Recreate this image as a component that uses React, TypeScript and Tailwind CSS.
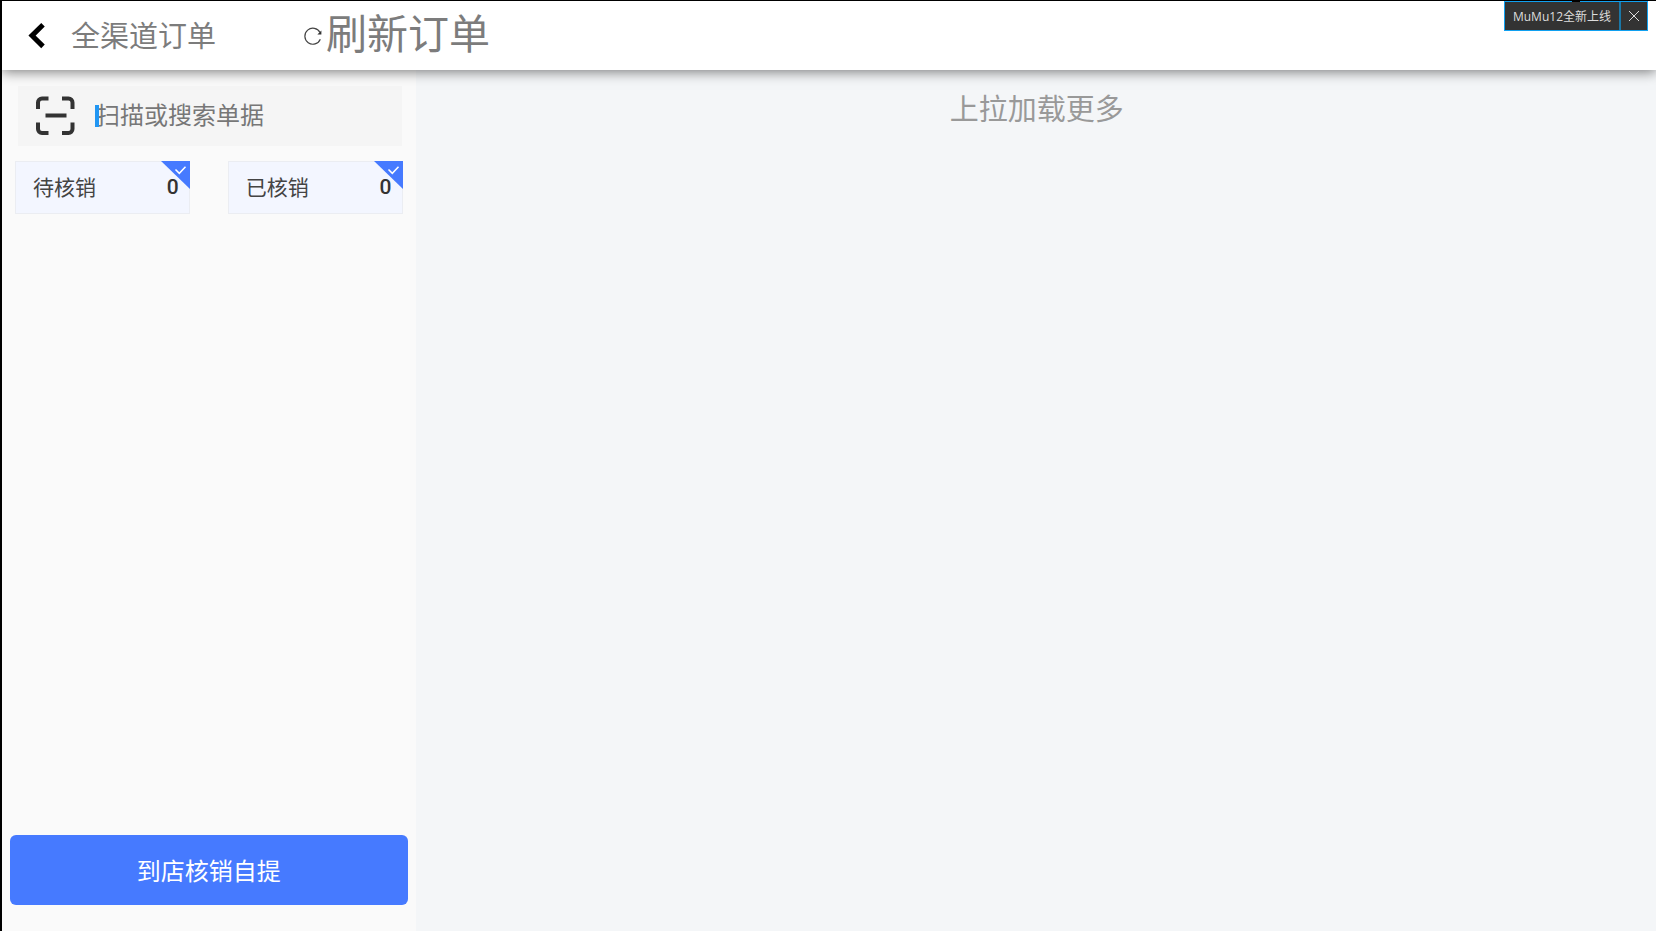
import { useState } from 'react';

const tabs = [
  { id: 'pending', label: '待核销', count: 0 },
  { id: 'done', label: '已核销', count: 0 },
];

function BackIcon() {
  return (
    <svg className="h-7 w-5" viewBox="0 0 20 28" fill="none" stroke="#000" strokeWidth="5" aria-hidden="true">
      <path d="M17 2.800 6 13.600l11 10.800" />
    </svg>
  );
}

function RefreshIcon() {
  return (
    <svg className="h-5 w-5" viewBox="0 0 20 20" fill="none" stroke="#444" strokeWidth="1.2" aria-hidden="true">
      <path d="M17.300 13.200A8 8 0 1 1 17 6.600" />
      <path d="M18.400 4.600v3.900h-4z" fill="#333" stroke="none" />
    </svg>
  );
}

function ScanIcon() {
  return (
    <svg className="h-10 w-10 shrink-0" viewBox="0 0 40 40" fill="none" stroke="#333" strokeWidth="4" aria-hidden="true">
      <path d="M3 13V6.500a4 4 0 0 1 4-4h6.500M27 2.500h6.500a4 4 0 0 1 4 4V13M37.500 26.500V33a4 4 0 0 1-4 4H27M13.500 37H7a4 4 0 0 1-4-4v-6.500M10.500 19.500h21" />
    </svg>
  );
}

export default function App() {
  const [query, setQuery] = useState('');
  const [showPromo, setShowPromo] = useState(true);

  return (
    <div className="relative flex h-screen flex-col border-t border-l-2 border-black bg-[#f4f6f8] font-['Noto_Sans_CJK_SC',sans-serif]">
      {/* Top bar */}
      <header className="relative z-10 flex h-[69px] shrink-0 items-center bg-white pl-6 shadow-[0_2px_12px_rgba(0,0,0,0.5)]">
        <button type="button" aria-label="返回" className="mr-[25px]">
          <BackIcon />
        </button>
        <h1 className="pb-0.5 text-[29px] leading-none text-[#7c7c7c]">全渠道订单</h1>
        <button type="button" className="ml-[87px] flex items-center gap-[3px] text-[#7c7c7c]">
          <RefreshIcon />
          <span className="pb-2 text-[41px] leading-none">刷新订单</span>
        </button>
      </header>

      <div className="flex min-h-0 flex-1">
        {/* Sidebar */}
        <aside className="flex w-1/4 flex-col bg-[#fafafa]">
          <label className="mt-4 mr-[14px] ml-4 flex h-[60px] items-center gap-5 bg-[#f5f5f5] pl-[17px]">
            <ScanIcon />
            <span className="relative flex min-w-0 flex-1 items-center">
              <input
                type="text"
                aria-label="扫描或搜索单据"
                placeholder="扫描或搜索单据"
                value={query}
                onChange={e => setQuery(e.target.value)}
                className="w-full bg-transparent pb-1 pl-px text-[24px] leading-8 text-[#333] caret-[#2196f3] outline-none placeholder:text-[#777]"
              />
              {query === '' && <span className="absolute left-0 h-[22px] w-1 bg-[#2196f3]" />}
            </span>
          </label>

          <div className="mt-[15px] mr-[13px] ml-[13px] flex gap-[38px]">
            {tabs.map(tab => (
              <button
                key={tab.id}
                type="button"
                className="relative flex h-[53px] flex-1 items-center justify-between border border-[#ebedf2] bg-[#f3f6ff] pr-[10px] pl-[17px] text-[#333]"
              >
                <svg className="absolute -top-px -right-px h-7 w-[29px]" viewBox="0 0 29 28" fill="none" aria-hidden="true">
                  <path d="M0 0h29v28z" fill="#467aff" />
                  <path d="m14.500 8.500 3.800 3.800 6.200-6.600" stroke="#fff" strokeWidth="1.500" />
                </svg>
                <span className="pb-[3px] text-[21px] leading-none text-[#444]">{tab.label}</span>
                <span className="relative font-[Roboto,sans-serif] text-[21px] leading-none font-medium">{tab.count}</span>
              </button>
            ))}
          </div>

          <button type="button" className="mx-2 mt-auto mb-[26px] h-[70px] rounded-md bg-[#467aff] pb-px text-[24px] text-white">
            到店核销自提
          </button>
        </aside>

        {/* Order list */}
        <main className="flex-1 pt-[23px] pl-0.5 text-center">
          <p className="text-[29px] leading-none text-[#999]">上拉加载更多</p>
        </main>
      </div>

      {/* Promo strip */}
      {showPromo && (
        <div className="absolute top-0 right-2 z-20 flex h-[30px] border border-[#10a0f0] bg-[#333] font-['Open_Sans','Noto_Sans_CJK_SC',sans-serif] text-[12px] text-[#ddd]">
          <a href="#promo" className="flex items-center px-2 pt-px">MuMu12全新上线</a>
          <button
            type="button"
            aria-label="关闭"
            onClick={() => setShowPromo(false)}
            className="flex w-7 items-center justify-center border-l-2 border-[#1a78a8]"
          >
            <svg className="h-3 w-3" viewBox="0 0 12 12" stroke="#ddd" aria-hidden="true">
              <path d="m1 1 10 10M11 1 1 11" />
            </svg>
          </button>
          <span className="absolute -top-1 left-[67px] h-1 w-2 bg-black" />
        </div>
      )}
    </div>
  );
}
